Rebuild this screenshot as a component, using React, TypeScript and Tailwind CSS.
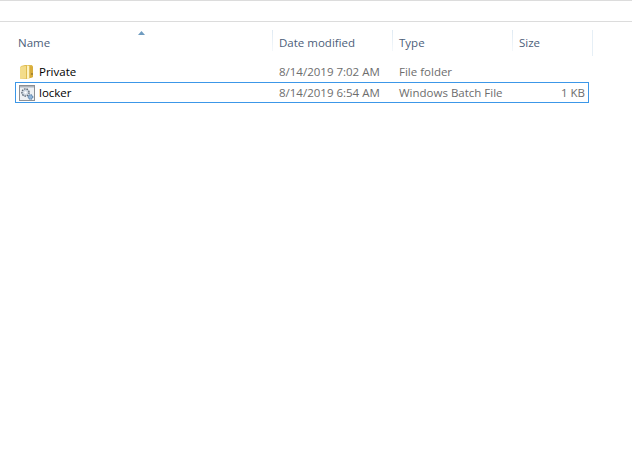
const rows = [
  { name: 'Private', date: '8/14/2019 7:02 AM', type: 'File folder', size: '', icon: 'folder', selected: false },
  { name: 'locker', date: '8/14/2019 6:54 AM', type: 'Windows Batch File', size: '1 KB', icon: 'batch', selected: true },
]

function FolderIcon() {
  return (
    <svg width="16" height="16" viewBox="0 0 16 16" className="shrink-0">
      <path d="M1 4 L2 2 L6 1 L13 1 L14 3 L14 13 L8 15 L1 14.5 Z" fill="#dfbb4e" />
      <path d="M1 4 L1 14.5 L7 14.5 L7 2 L2 2.5 Z" fill="#f3dc8a" />
      <path d="M8 1.5 L8 15 L10.5 14.2 L10.5 2 Z" fill="#fdf3c4" />
      <path d="M10.5 2 L14 2.6 L14 13 L10.5 14.2 Z" fill="#d8ad3c" />
      <rect x="12.5" y="9" width="1" height="2" fill="#7d6526" />
    </svg>
  )
}

function BatchIcon() {
  return (
    <svg width="16" height="16" viewBox="0 0 16 16" className="shrink-0">
      <rect x="0.5" y="0.5" width="15" height="15" fill="#eef1f4" stroke="#8c8f94" />
      <rect x="1" y="1" width="14" height="1.5" fill="#aeb4bb" />
      <circle cx="6.5" cy="7.5" r="3.6" fill="#cfd8e2" stroke="#5f6b78" strokeWidth="1.4" strokeDasharray="1.6 0.9" />
      <circle cx="6.5" cy="7.5" r="1.2" fill="#ffffff" />
      <circle cx="11.5" cy="12" r="2.3" fill="#8fb4d8" stroke="#3f6a96" strokeWidth="1" strokeDasharray="1.1 0.6" />
    </svg>
  )
}

function Separator() {
  return <div className="absolute left-0 top-0 h-[21px] w-px bg-gradient-to-b from-[#dfeaf3] to-[#f4f8fb]" />
}

export default function App() {
  return (
    <div className="min-h-[471px] w-[632px] bg-white font-['Open_Sans',sans-serif] text-[11.5px]">
      <div className="h-[22px] border-t border-b border-[#dcdcdc]" />

      {/* column headers */}
      <div className="relative mt-[8px] grid h-[21px] grid-cols-[272px_120px_120px_81px] items-center text-[#4c607a]">
        <div className="relative pl-[18px]">
          Name
          <svg width="7" height="4" viewBox="0 0 7 4" className="absolute left-[138px] top-[-3px]">
            <path d="M0 4 L3.5 0 L7 4 Z" fill="#6f9cc0" />
          </svg>
        </div>
        <div className="relative h-full pl-[7px] leading-[26px]"><Separator />Date modified</div>
        <div className="relative h-full pl-[7px] leading-[26px]"><Separator />Type</div>
        <div className="relative h-full border-r border-[#e6eff6] pl-[7px] leading-[26px]"><Separator />Size</div>
      </div>

      {/* file rows */}
      <div className="mt-[10px] w-[574px] pl-[15px] box-content">
        {rows.map(r => (
          <div
            key={r.name}
            className={`grid h-[21px] w-[574px] grid-cols-[263px_120px_120px_66px] items-center border ${r.selected ? 'border-[#3c97e8]' : 'border-transparent'}`}
          >
            <div className="flex items-center gap-[4px] pl-[3px] text-black">
              {r.icon === 'folder' ? <FolderIcon /> : <BatchIcon />}
              {r.name}
            </div>
            <div className="text-[#6d6d6d]">{r.date}</div>
            <div className="text-[#6d6d6d]">{r.type}</div>
            <div className="text-right text-[#6d6d6d]">{r.size}</div>
          </div>
        ))}
      </div>
    </div>
  )
}
